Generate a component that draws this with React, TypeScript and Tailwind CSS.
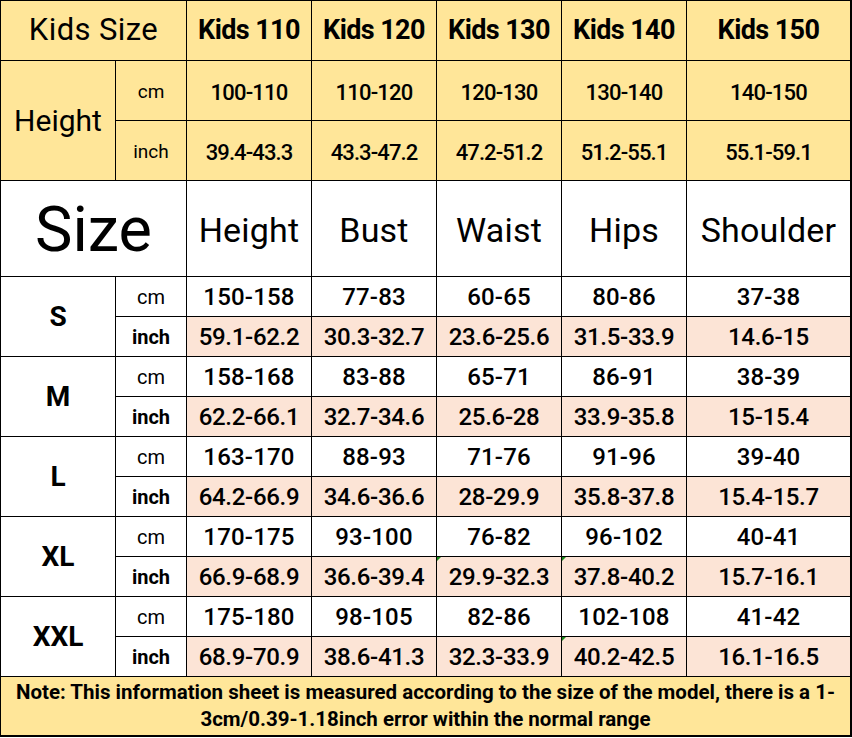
import React from "react";

const Y = "bg-[#ffe699]";
const P = "bg-[#fce4d6]";
const W = "bg-white";

const sizes = [
  { s: "S", cm: ["150-158", "77-83", "60-65", "80-86", "37-38"], inch: ["59.1-62.2", "30.3-32.7", "23.6-25.6", "31.5-33.9", "14.6-15"] },
  { s: "M", cm: ["158-168", "83-88", "65-71", "86-91", "38-39"], inch: ["62.2-66.1", "32.7-34.6", "25.6-28", "33.9-35.8", "15-15.4"] },
  { s: "L", cm: ["163-170", "88-93", "71-76", "91-96", "39-40"], inch: ["64.2-66.9", "34.6-36.6", "28-29.9", "35.8-37.8", "15.4-15.7"] },
  { s: "XL", cm: ["170-175", "93-100", "76-82", "96-102", "40-41"], inch: ["66.9-68.9", "36.6-39.4", "29.9-32.3", "37.8-40.2", "15.7-16.1"] },
  { s: "XXL", cm: ["175-180", "98-105", "82-86", "102-108", "41-42"], inch: ["68.9-70.9", "38.6-41.3", "32.3-33.9", "40.2-42.5", "16.1-16.5"] },
];

const marks: Record<string, boolean> = {
  "XL-2": true,
  "XL-3": true,
  "XXL-3": true,
};

function Cell({ className = "", children }: { className?: string; children?: React.ReactNode }) {
  return (
    <div className={"relative flex items-center justify-center text-black " + className}>
      {children}
    </div>
  );
}

export default function App() {
  return (
    <div
      className="w-[852px] h-[738px] bg-white"
      style={{ fontFamily: "Roboto, 'Liberation Sans', sans-serif" }}
    >
      <div className="grid w-[852px] gap-px bg-black p-px pr-[2px] pb-[2px] grid-cols-[114px_70px_124px_124px_124px_124px_163px] grid-rows-[59px_59px_59px_95px_repeat(10,39px)_58px]">
        {/* header */}
        <Cell className={Y + " col-span-2 text-[31px] tracking-[0.4px]"}>Kids Size</Cell>
        {["Kids 110", "Kids 120", "Kids 130", "Kids 140", "Kids 150"].map((k) => (
          <Cell key={k} className={Y + " text-[27px] font-bold tracking-[-0.6px]"}>
            {k}
          </Cell>
        ))}
        {/* height rows */}
        <Cell className={Y + " row-span-2 text-[30px] tracking-[0px]"}>Height</Cell>
        <Cell className={Y + " text-[19px] pt-1"}>cm</Cell>
        {["100-110", "110-120", "120-130", "130-140", "140-150"].map((v) => (
          <Cell key={v} className={Y + " text-[22px] font-medium text-[#111] tracking-[-0.8px] pt-1"}>
            {v}
          </Cell>
        ))}
        <Cell className={Y + " text-[19px] pt-1"}>inch</Cell>
        {["39.4-43.3", "43.3-47.2", "47.2-51.2", "51.2-55.1", "55.1-59.1"].map((v) => (
          <Cell key={v} className={Y + " text-[22px] font-medium text-[#111] tracking-[-0.9px] pt-1"}>
            {v}
          </Cell>
        ))}
        {/* Size row */}
        <Cell className={W + " col-span-2 text-[63px] pt-1"}>Size</Cell>
        {["Height", "Bust", "Waist", "Hips", "Shoulder"].map((h) => (
          <Cell key={h} className={W + " text-[34px] tracking-[0.2px] pt-1"}>
            {h}
          </Cell>
        ))}
        {sizes.map((r) => (
          <React.Fragment key={r.s}>
            <Cell className={W + " row-span-2 text-[28px] font-bold"}>{r.s}</Cell>
            <Cell className={W + " text-[20px]"}>cm</Cell>
            {r.cm.map((v, i) => (
              <Cell key={"c" + i} className={W + " text-[24px] font-medium tracking-[0.2px]"}>
                {v}
              </Cell>
            ))}
            <Cell className={W + " text-[20px] font-bold"}>inch</Cell>
            {r.inch.map((v, i) => (
              <Cell key={"i" + i} className={P + " text-[24px] font-medium tracking-[-0.3px]"}>
                {marks[r.s + "-" + i] && (
                  <span className="absolute left-0 top-0 h-0 w-0 border-t-[4px] border-r-[4px] border-t-[#1a8a1a] border-r-transparent" />
                )}
                {v}
              </Cell>
            ))}
          </React.Fragment>
        ))}
        {/* note */}
        <div className={Y + " col-span-7 flex items-center justify-center px-1 text-center text-[20.5px] font-bold leading-[27px] text-black"}>
          Note: This information sheet is measured according to the size of the model, there is a 1-3cm/0.39-1.18inch error within the normal range
        </div>
      </div>
    </div>
  );
}
